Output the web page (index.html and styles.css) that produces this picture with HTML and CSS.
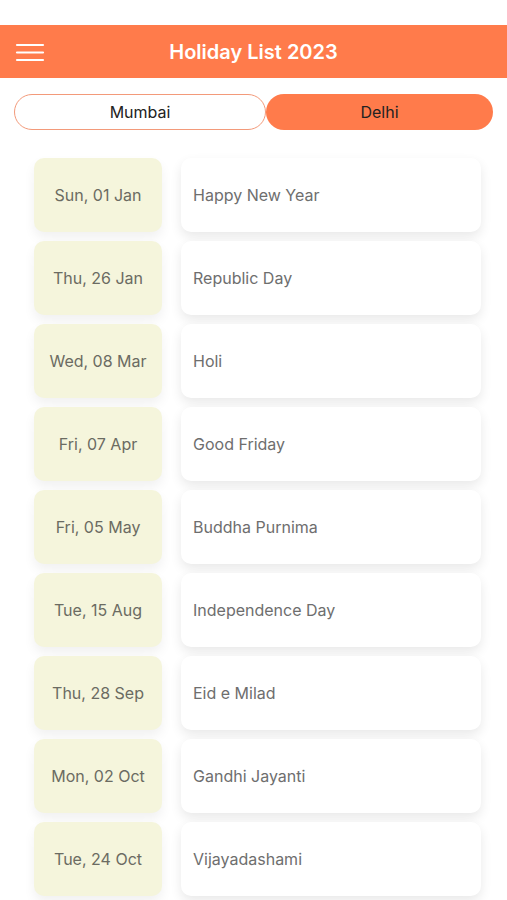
FILE: index.html
```html
<!DOCTYPE html>
<html>
<head>
<meta charset="utf-8">
<link rel="stylesheet" href="styles.css">
</head>
<body>
<div class="status"></div>
<header class="bar">
  <button class="menu" aria-label="menu">
    <svg width="30" height="20" viewBox="0 0 30 20"><g stroke="#fff" stroke-width="2.2" stroke-linecap="round"><line x1="2" y1="2" x2="28" y2="2"/><line x1="2" y1="9.5" x2="28" y2="9.5"/><line x1="2" y1="17" x2="28" y2="17"/></g></svg>
  </button>
  <h1 class="title">Holiday List 2023</h1>
</header>
<div class="seg">
  <div class="seg-item">Mumbai</div>
  <div class="seg-item active">Delhi</div>
</div>
<div class="list">
  <div class="row"><div class="date">Sun, 01 Jan</div><div class="name">Happy New Year</div></div>
  <div class="row"><div class="date">Thu, 26 Jan</div><div class="name">Republic Day</div></div>
  <div class="row"><div class="date">Wed, 08 Mar</div><div class="name">Holi</div></div>
  <div class="row"><div class="date">Fri, 07 Apr</div><div class="name">Good Friday</div></div>
  <div class="row"><div class="date">Fri, 05 May</div><div class="name">Buddha Purnima</div></div>
  <div class="row"><div class="date">Tue, 15 Aug</div><div class="name">Independence Day</div></div>
  <div class="row"><div class="date">Thu, 28 Sep</div><div class="name">Eid e Milad</div></div>
  <div class="row"><div class="date">Mon, 02 Oct</div><div class="name">Gandhi Jayanti</div></div>
  <div class="row"><div class="date">Tue, 24 Oct</div><div class="name">Vijayadashami</div></div>
</div>
</body>
</html>
```
FILE: styles.css
```css
html, body {
  margin: 0;
  padding: 0;
  background: #fff;
  font-family: Inter, "Liberation Sans", sans-serif;
  height: 900px;
  overflow: hidden;
}
.status {
  height: 25px;
}
.bar {
  height: 53px;
  background: #ff7b4b;
  display: flex;
  align-items: center;
  justify-content: center;
  position: relative;
}
.menu {
  position: absolute;
  left: 15px;
  top: 18px;
  background: none;
  border: 0;
  padding: 0;
  width: 30px;
  height: 20px;
}
.menu svg { display: block; }
.title {
  margin: 0;
  color: #fff;
  font-size: 20px;
  font-weight: 600;
  letter-spacing: 0;
}
.seg {
  display: flex;
  margin: 16px 14px 0 14px;
  height: 36px;
}
.seg-item {
  flex: 1;
  display: flex;
  align-items: center;
  justify-content: center;
  font-size: 16px;
  color: #222;
  border-radius: 18px;
}
.seg-item:first-child {
  flex: 0 0 252px;
  border: 1.5px solid #f39a7a;
  box-sizing: border-box;
}
.seg-item.active {
  background: #ff7b4b;
}
.list {
  display: flex;
  flex-direction: column;
  gap: 9px;
  margin-top: 28px;
  padding: 0 26px 0 34px;
}
.row {
  display: flex;
  gap: 19px;
  height: 74px;
}
.date {
  flex: 0 0 128px;
  background: #f5f5dc;
  border-radius: 10px;
  display: flex;
  align-items: center;
  justify-content: center;
  font-size: 16px;
  color: #6b6b62;
  box-shadow: 0 6px 12px rgba(0,0,0,0.06);
}
.name {
  flex: 1;
  background: #fff;
  border-radius: 10px;
  display: flex;
  align-items: center;
  padding-left: 12px;
  font-size: 16px;
  color: #6e6e6e;
  box-shadow: 0 5px 12px rgba(0,0,0,0.09);
}
```
